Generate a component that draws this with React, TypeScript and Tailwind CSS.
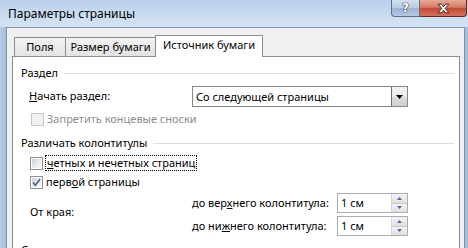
import React from 'react';

const Check: React.FC<{ checked?: boolean; disabled?: boolean }> = ({ checked, disabled }) => (
    <div className={`w-[13px] h-[13px] shrink-0 border p-px ${disabled ? 'border-[#c5c5c5] bg-[#f4f4f4]' : 'border-[#8e8f8f] bg-white'}`}>
        <div className={`w-full h-full flex items-center justify-center ${disabled ? 'bg-[#f0f0f0]' : 'bg-[linear-gradient(135deg,#cbcfd5,#eceef0_60%,#f7f7f7)]'}`}>
            {checked && (
                <svg viewBox="0 0 9 9" className="w-[9px] h-[9px]">
                    <path d="M1 4.5 L3.4 7.2 L8 1.2" fill="none" stroke="#4a5f97" strokeWidth="1.6" />
                </svg>
            )}
        </div>
    </div>
);

const Spin: React.FC<{ value: string }> = ({ value }) => (
    <div className="w-[71px] h-[20px] border border-[#abadb3] bg-white flex">
        <span className="flex-1 pl-[3px] leading-[18px]">{value}</span>
        <div className="w-[16px] flex flex-col border-l border-[#d6d6d6]">
            <div className="flex-1 flex items-center justify-center border-b border-[#c8c8c8] bg-[linear-gradient(#f4f4f4,#e0e0e0)]">
                <svg viewBox="0 0 5 3" className="w-[5px] h-[3px]"><path d="M2.5 0 L5 3 L0 3Z" fill="#4d6a9e" /></svg>
            </div>
            <div className="flex-1 flex items-center justify-center bg-[linear-gradient(#f4f4f4,#e0e0e0)]">
                <svg viewBox="0 0 5 3" className="w-[5px] h-[3px]"><path d="M0 0 L5 0 L2.5 3Z" fill="#4d6a9e" /></svg>
            </div>
        </div>
    </div>
);

const Heading: React.FC<{ text: string }> = ({ text }) => (
    <div className="flex items-center h-[16px]">
        <span className="leading-[16px] whitespace-nowrap">{text}</span>
        <div className="flex-1 h-px bg-[#d5dfe5] ml-[6px]" />
    </div>
);

export default function App() {
    return (
        <div className="w-[468px] h-[248px] overflow-hidden flex flex-col font-['Noto_Sans',sans-serif] text-[11px] text-black bg-[#c4d8ee] whitespace-nowrap">
            {/* title bar */}
            <div className="h-[27px] shrink-0 flex justify-between bg-[linear-gradient(180deg,#b9cfe8,#c9dcf0_55%,#d3e3f3)]">
                <span className="pl-[8px] pt-[5px] leading-[17px] text-[12px]">Параметры страницы</span>
                <div className="flex items-start pr-px">
                    <div className="w-[29px] h-[17px] rounded-bl-[4px] border border-t-0 border-[#5e7089] bg-[linear-gradient(#d3e0ef,#b8cbe2_50%,#9cb3d0_51%,#b3c8e2)] flex items-center justify-center">
                        <span className="font-['DejaVu_Sans',sans-serif] font-bold text-[12px] leading-none text-white [text-shadow:0_0_1px_#233,0_0_1px_#233,0_0_1px_#233]">?</span>
                    </div>
                    <div className="w-[47px] h-[17px] rounded-br-[4px] border border-t-0 border-l-0 border-[#6b2a22] bg-[linear-gradient(#e9a99a,#d77a65_45%,#c24b33_52%,#d5715a)] flex items-center justify-center">
                        <svg viewBox="0 0 12 10" className="w-[13px] h-[11px]">
                            <path d="M1 1 H4 L6 3.3 L8 1 H11 L7.6 5 L11 9 H8 L6 6.7 L4 9 H1 L4.4 5Z" fill="#fff" stroke="#3a2a2a" strokeWidth="0.9" strokeLinejoin="round" />
                        </svg>
                    </div>
                </div>
            </div>
            <div className="flex-1 flex">
                <div className="w-[6px] bg-[linear-gradient(90deg,#b7cde6,#a6bedb)]" />
                {/* client area */}
                <div className="flex-1 border border-b-0 border-[#7f93ad] bg-[#f0f0f0] pl-[5px] pr-[4px] pt-[7px] flex flex-col">
                    {/* tabs */}
                    <div className="h-[21px] flex items-end pl-[2px] relative z-10">
                        <div className="w-[52px] h-[19px] border border-b-0 border-[#898c95] bg-[linear-gradient(#f2f2f2,#e3e3e3)] flex items-center justify-center pt-px">Поля</div>
                        <div className="w-[90px] h-[19px] border border-b-0 border-l-0 border-[#898c95] bg-[linear-gradient(#f2f2f2,#e3e3e3)] flex items-center justify-center pt-px">Размер бумаги</div>
                        <div className="w-[108px] h-[22px] -mb-px ml-[-1px] border border-b-0 border-[#898c95] bg-white flex items-center justify-center pb-[2px]">Источник бумаги</div>
                    </div>
                    {/* panel */}
                    <div className="flex-1 border border-b-0 border-[#898c95] bg-white pl-[8px] pr-[5px] pt-[8px] flex flex-col">
                        <Heading text="Раздел" />
                        <div className="mt-[5px] flex items-center h-[21px]">
                            <span className="w-[171px] pl-[8px]"><u>Н</u>ачать раздел:</span>
                            <div className="w-[216px] h-[21px] border border-[#828790] flex">
                                <span className="flex-1 pl-[3px] leading-[19px]">Со следующей страницы</span>
                                <div className="w-[16px] border-l border-[#707070] bg-[linear-gradient(#f2f2f2,#ebebeb_50%,#dddddd_51%,#cfcfcf)] flex items-center justify-center">
                                    <svg viewBox="0 0 7 4" className="w-[7px] h-[4px]"><path d="M0 0 H7 L3.5 4Z" fill="#000" /></svg>
                                </div>
                            </div>
                        </div>
                        <div className="mt-[4px] h-[16px] flex items-center pl-[10px] gap-[3px]">
                            <Check disabled />
                            <span className="text-[#8d8d8d] leading-[16px]">Запретить концевые сноски</span>
                        </div>
                        <div className="mt-[8px]"><Heading text="Различать колонтитулы" /></div>
                        <div className="mt-[4px] h-[16px] flex items-center pl-[9px] gap-[2px]">
                            <Check />
                            <span className="border border-dotted border-black px-px leading-[14px]"><u>ч</u>етных и нечетных страниц</span>
                        </div>
                        <div className="mt-[3px] h-[16px] flex items-center pl-[9px] gap-[3px]">
                            <Check checked />
                            <span className="leading-[16px]">перв<u>о</u>й страницы</span>
                        </div>
                        <div className="mt-[3px] flex">
                            <span className="w-[171px] pl-[9px] pt-[11px] leading-[16px]">От края:</span>
                            <div className="flex flex-col gap-[3px]">
                                <div className="flex items-center h-[20px]">
                                    <span className="w-[145px]">до вер<u>х</u>него колонтитула:</span>
                                    <Spin value="1 см" />
                                </div>
                                <div className="flex items-center h-[20px]">
                                    <span className="w-[145px]">до ни<u>ж</u>него колонтитула:</span>
                                    <Spin value="1 см" />
                                </div>
                            </div>
                        </div>
                        <div className="mt-[6px]"><Heading text="Страница" /></div>
                    </div>
                </div>
                <div className="w-[3px] bg-[#a6bedb]" />
            </div>
        </div>
    );
}
